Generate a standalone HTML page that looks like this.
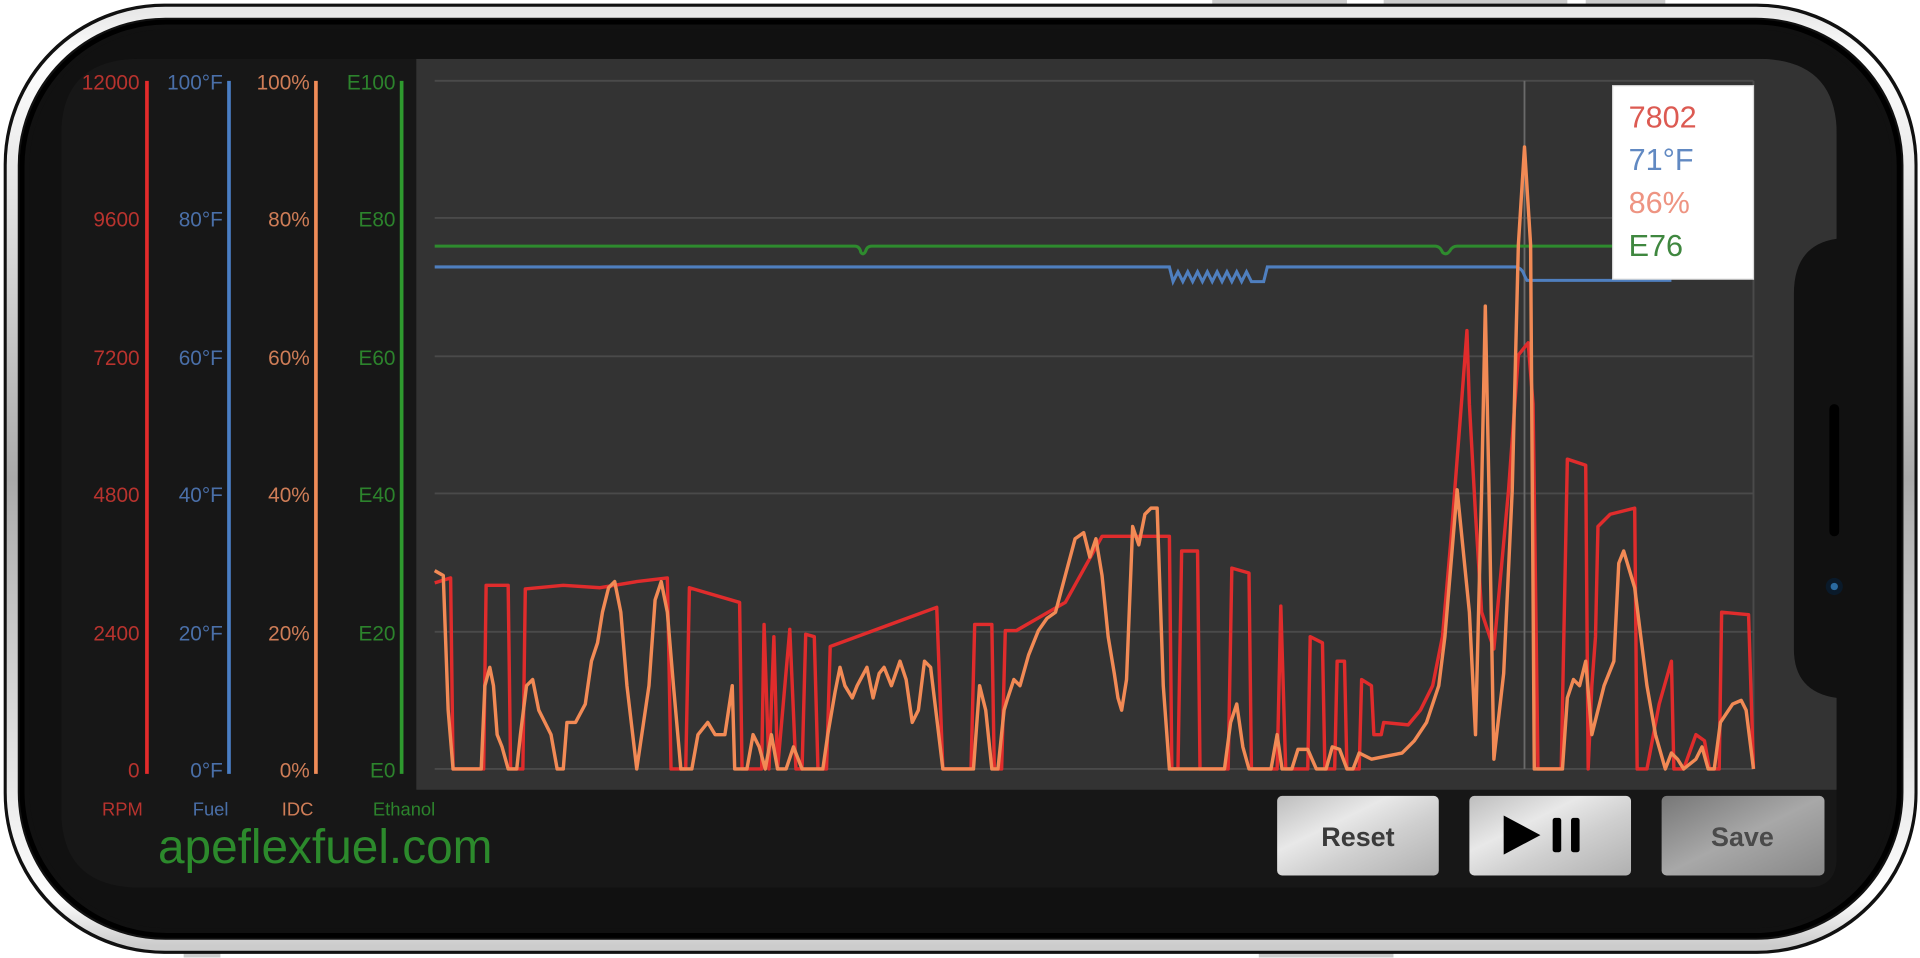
<!DOCTYPE html>
<html><head><meta charset="utf-8"><style>
html,body{margin:0;padding:0;background:#fff;width:1920px;height:958px;overflow:hidden}
svg{display:block}
text{font-family:"Liberation Sans",sans-serif}
</style></head><body>
<svg width="1920" height="958" viewBox="0 0 1568 782.4" preserveAspectRatio="none" xmlns="http://www.w3.org/2000/svg">
<defs>
<linearGradient id="rim" x1="0" y1="0" x2="0" y2="1">
<stop offset="0" stop-color="#e8e8e8"/><stop offset="0.05" stop-color="#fff"/><stop offset="0.5" stop-color="#aaa"/><stop offset="0.95" stop-color="#fff"/><stop offset="1" stop-color="#ccc"/>
</linearGradient>
<linearGradient id="btn" x1="0" y1="0" x2="1" y2="1">
<stop offset="0" stop-color="#bdbdbd"/><stop offset="0.35" stop-color="#e8e8e8"/><stop offset="0.6" stop-color="#cfcfcf"/><stop offset="1" stop-color="#b0b0b0"/>
</linearGradient>
<linearGradient id="btn2" x1="0" y1="0" x2="1" y2="1">
<stop offset="0" stop-color="#777"/><stop offset="0.5" stop-color="#a8a8a8"/><stop offset="1" stop-color="#888"/>
</linearGradient>
<clipPath id="scr"><path d="M115,48 H1435 Q1500,48 1500,110 V195 Q1465,200 1465,240 V530 Q1465,565 1500,570 V700 Q1500,725 1475,725 H115 Q50,725 50,662 V110 Q50,48 115,48 Z"/></clipPath>
</defs>
<rect x="990" y="0" width="110" height="6" fill="#ccc"/>
<rect x="1130" y="0" width="150" height="6" fill="#ccc"/>
<rect x="1295" y="0" width="65" height="6" fill="#ccc"/>
<rect x="150" y="776" width="30" height="6" fill="#ccc"/>
<rect x="1028" y="776" width="110" height="6" fill="#ccc"/>
<rect x="4" y="4" width="1561" height="774" rx="130" fill="#111" stroke="#111" stroke-width="2"/>
<rect x="10" y="10" width="1549" height="762" rx="125" fill="none" stroke="url(#rim)" stroke-width="9"/>
<rect x="18" y="18" width="1533" height="746" rx="118" fill="none" stroke="#000" stroke-width="4"/>
<rect x="24" y="24" width="1521" height="734" rx="112" fill="#111"/>
<g clip-path="url(#scr)">
<rect x="50" y="48" width="1450" height="677" fill="#171717"/>
<rect x="340" y="48" width="1160" height="597" fill="#333"/>
<g stroke="#4a4a4a" stroke-width="1.6">
<line x1="355" y1="66" x2="1432" y2="66"/><line x1="355" y1="178" x2="1432" y2="178"/><line x1="355" y1="291" x2="1432" y2="291"/><line x1="355" y1="403" x2="1432" y2="403"/><line x1="355" y1="516" x2="1432" y2="516"/><line x1="355" y1="628" x2="1432" y2="628"/>
<line x1="1432" y1="66" x2="1432" y2="628"/>
</g>
<line x1="1245" y1="66" x2="1245" y2="628" stroke="#6a6a6a" stroke-width="1.5"/>
<path d="M355,201 H698 Q702,201 703,206 Q705,209 707,205 Q708,201 712,201 H1172 Q1176,201 1178,206 Q1181,209 1184,205 Q1186,201 1190,201 H1320" fill="none" stroke="#2e8b2e" stroke-width="2.5"/>
<path d="M355,218 H955 L958,230 L962,222 L966,230 L970,222 L974,230 L978,222 L982,230 L986,222 L990,230 L994,222 L998,230 L1002,222 L1006,230 L1010,222 L1014,230 L1018,222 L1022,230 L1032,230 L1035,218 H1238 Q1243,219 1245,225 L1247,229 H1365" fill="none" stroke="#4f7fbf" stroke-width="2.5"/>
<polyline fill="none" stroke="#e02c2c" stroke-width="2.8" stroke-linejoin="round" points="355,476 368,472 370,628 395,628 397,478 415,478 417,628 427,628 429,481 460,478 490,480 520,475 545,472 548,628 560,628 563,480 604,492 606,628 622,628 624,510 628,628 632,520 635,628 645,514 650,628 655,628 658,518 665,520 668,628 675,628 678,528 765,496 770,628 793,628 796,510 810,510 812,628 818,628 821,515 830,515 870,492 900,438 955,438 957,628 962,628 965,450 978,450 980,628 1003,628 1006,464 1020,468 1022,628 1043,628 1046,495 1050,628 1068,628 1070,520 1080,525 1082,628 1090,628 1092,540 1098,540 1100,628 1110,628 1112,555 1120,560 1122,600 1128,600 1130,590 1150,592 1160,580 1170,560 1178,520 1185,440 1195,310 1198,270 1200,330 1205,420 1210,500 1220,530 1232,400 1240,290 1248,280 1252,330 1256,628 1275,628 1280,375 1295,380 1297,628 1300,560 1303,520 1305,430 1315,420 1335,415 1337,628 1345,628 1355,575 1365,540 1367,628 1375,628 1385,600 1392,605 1396,628 1404,628 1406,500 1428,502 1432,628"/>
<polyline fill="none" stroke="#f28a55" stroke-width="2.8" stroke-linejoin="round" points="355,466 362,470 366,580 370,628 393,628 396,560 400,545 403,560 406,600 410,610 415,628 422,628 425,600 430,560 435,555 440,580 445,590 450,600 455,628 460,628 463,590 470,590 478,575 483,540 488,525 492,500 497,480 502,475 507,500 512,560 520,628 530,560 535,490 540,475 545,500 550,560 556,628 565,628 570,600 578,590 584,600 592,600 598,560 600,628 610,628 615,600 620,610 625,628 630,600 635,628 642,628 648,610 655,628 672,628 676,600 682,565 686,545 690,560 696,570 700,560 708,545 713,570 718,550 722,545 728,560 735,540 740,555 745,590 750,580 755,540 760,545 770,628 795,628 800,560 805,580 810,628 815,628 820,580 823,570 828,555 833,560 840,535 848,515 855,505 862,500 870,470 878,440 885,435 890,455 895,440 900,470 905,520 910,550 913,570 916,580 920,555 925,430 930,445 935,420 940,415 945,415 950,560 955,628 1000,628 1005,590 1010,575 1015,610 1020,628 1038,628 1043,600 1047,628 1055,628 1060,612 1068,612 1075,628 1083,628 1088,610 1094,612 1100,628 1105,628 1110,615 1120,620 1130,618 1145,615 1155,605 1165,590 1175,560 1180,520 1190,400 1200,500 1205,600 1210,400 1213,250 1216,400 1220,620 1228,550 1235,400 1240,200 1245,120 1250,200 1253,628 1276,628 1280,570 1285,555 1290,560 1295,540 1300,600 1305,580 1310,560 1318,540 1322,460 1326,450 1335,480 1340,520 1345,560 1352,600 1360,628 1365,615 1370,620 1375,628 1385,620 1390,610 1395,628 1400,628 1405,590 1415,575 1422,572 1426,580 1432,628"/>
<rect x="1317" y="70" width="115" height="158" fill="#fff" stroke="#ddd"/>
<text x="1330" y="104" font-size="25" fill="#dc5a52">7802</text>
<text x="1330" y="139" font-size="25" fill="#6189c2">71°F</text>
<text x="1330" y="174" font-size="25" fill="#ee9482">86%</text>
<text x="1330" y="209" font-size="25" fill="#3f873f">E76</text>
<g stroke-width="3">
<line x1="120" y1="66" x2="120" y2="632" stroke="#e32b2b"/>
<line x1="187" y1="66" x2="187" y2="632" stroke="#4a7ec4"/>
<line x1="258" y1="66" x2="258" y2="632" stroke="#f08c58"/>
<line x1="328" y1="66" x2="328" y2="632" stroke="#2e9a2e"/>
</g>
<g font-size="17" text-anchor="end">
<g fill="#b8332e"><text x="114" y="73">12000</text><text x="114" y="185">9600</text><text x="114" y="298">7200</text><text x="114" y="410">4800</text><text x="114" y="523">2400</text><text x="114" y="635">0</text></g>
<g fill="#4a6fa8"><text x="182" y="73">100°F</text><text x="182" y="185">80°F</text><text x="182" y="298">60°F</text><text x="182" y="410">40°F</text><text x="182" y="523">20°F</text><text x="182" y="635">0°F</text></g>
<g fill="#cf7d57"><text x="253" y="73">100%</text><text x="253" y="185">80%</text><text x="253" y="298">60%</text><text x="253" y="410">40%</text><text x="253" y="523">20%</text><text x="253" y="635">0%</text></g>
<g fill="#2c832c"><text x="323" y="73">E100</text><text x="323" y="185">E80</text><text x="323" y="298">E60</text><text x="323" y="410">E40</text><text x="323" y="523">E20</text><text x="323" y="635">E0</text></g>
</g>
<g font-size="15" text-anchor="middle">
<text x="100" y="666" fill="#b8332e">RPM</text><text x="172" y="666" fill="#4a6fa8">Fuel</text><text x="243" y="666" fill="#cf7d57">IDC</text><text x="330" y="666" fill="#2c832c">Ethanol</text>
</g>
<text x="129" y="705" font-size="39" fill="#2c8a2c">apeflexfuel.com</text>
<rect x="1043" y="650" width="132" height="65" rx="4" fill="url(#btn)"/>
<text x="1109" y="691" font-size="22" font-weight="bold" fill="#3a3a3a" text-anchor="middle">Reset</text>
<rect x="1200" y="650" width="132" height="65" rx="4" fill="url(#btn)"/>
<path d="M1228,666 L1258,682 L1228,698 Z" fill="#000"/>
<rect x="1268" y="668" width="7" height="28" rx="2" fill="#000"/>
<rect x="1283" y="668" width="7" height="28" rx="2" fill="#000"/>
<rect x="1357" y="650" width="133" height="65" rx="4" fill="url(#btn2)"/>
<text x="1423" y="691" font-size="22" font-weight="bold" fill="#4a4a4a" text-anchor="middle">Save</text>
</g>
<rect x="1494" y="330" width="8" height="108" rx="4" fill="#000"/>
<circle cx="1498" cy="479" r="7" fill="#0a1a2a"/><circle cx="1498" cy="479" r="3" fill="#2a6aa0"/>
</svg>
</body></html>
